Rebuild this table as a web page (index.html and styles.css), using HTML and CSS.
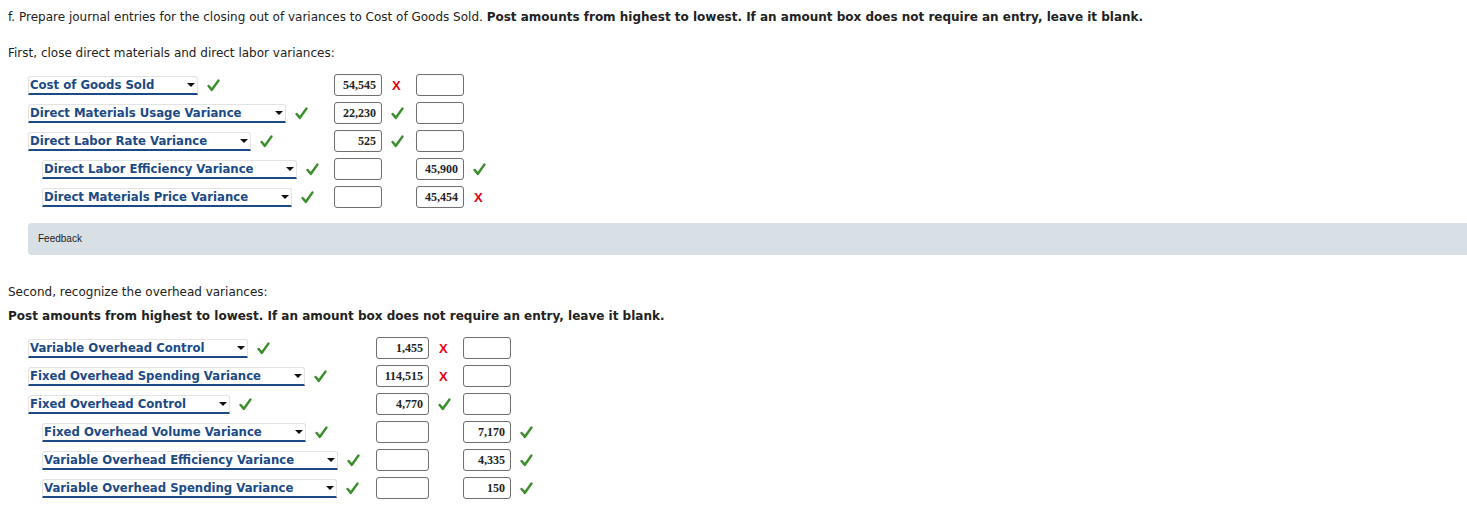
FILE: index.html
```html
<!DOCTYPE html>
<html>
<head>
<meta charset="utf-8">
<link rel="stylesheet" href="styles.css">
</head>
<body>
<p class="intro">f. Prepare journal entries for the closing out of variances to Cost of Goods Sold. <b>Post amounts from highest to lowest. If an amount box does not require an entry, leave it blank.</b></p>
<p class="sub">First, close direct materials and direct labor variances:</p>

<div class="entries block1">
  <div class="row">
    <div class="acct"><span class="sel">Cost of Goods Sold<i class="arr"></i></span><svg class="ok" viewBox="0 0 12 12"><path d="M1.5 6.5 L4.5 10 L10.5 1.5"/></svg></div>
    <div class="amt"><span class="box">54,545</span><span class="bad">X</span></div>
    <div class="amt"><span class="box"></span></div>
  </div>
  <div class="row">
    <div class="acct"><span class="sel">Direct Materials Usage Variance<i class="arr"></i></span><svg class="ok" viewBox="0 0 12 12"><path d="M1.5 6.5 L4.5 10 L10.5 1.5"/></svg></div>
    <div class="amt"><span class="box">22,230</span><svg class="ok" viewBox="0 0 12 12"><path d="M1.5 6.5 L4.5 10 L10.5 1.5"/></svg></div>
    <div class="amt"><span class="box"></span></div>
  </div>
  <div class="row">
    <div class="acct"><span class="sel">Direct Labor Rate Variance<i class="arr"></i></span><svg class="ok" viewBox="0 0 12 12"><path d="M1.5 6.5 L4.5 10 L10.5 1.5"/></svg></div>
    <div class="amt"><span class="box">525</span><svg class="ok" viewBox="0 0 12 12"><path d="M1.5 6.5 L4.5 10 L10.5 1.5"/></svg></div>
    <div class="amt"><span class="box"></span></div>
  </div>
  <div class="row">
    <div class="acct indent"><span class="sel">Direct Labor Efficiency Variance<i class="arr"></i></span><svg class="ok" viewBox="0 0 12 12"><path d="M1.5 6.5 L4.5 10 L10.5 1.5"/></svg></div>
    <div class="amt"><span class="box"></span></div>
    <div class="amt"><span class="box">45,900</span><svg class="ok" viewBox="0 0 12 12"><path d="M1.5 6.5 L4.5 10 L10.5 1.5"/></svg></div>
  </div>
  <div class="row">
    <div class="acct indent"><span class="sel">Direct Materials Price Variance<i class="arr"></i></span><svg class="ok" viewBox="0 0 12 12"><path d="M1.5 6.5 L4.5 10 L10.5 1.5"/></svg></div>
    <div class="amt"><span class="box"></span></div>
    <div class="amt"><span class="box">45,454</span><span class="bad">X</span></div>
  </div>
</div>

<div class="feedback">Feedback</div>

<p class="sub second">Second, recognize the overhead variances:</p>
<p class="sub strong">Post amounts from highest to lowest. If an amount box does not require an entry, leave it blank.</p>

<div class="entries block2">
  <div class="row">
    <div class="acct"><span class="sel">Variable Overhead Control<i class="arr"></i></span><svg class="ok" viewBox="0 0 12 12"><path d="M1.5 6.5 L4.5 10 L10.5 1.5"/></svg></div>
    <div class="amt"><span class="box">1,455</span><span class="bad">X</span></div>
    <div class="amt"><span class="box"></span></div>
  </div>
  <div class="row">
    <div class="acct"><span class="sel">Fixed Overhead Spending Variance<i class="arr"></i></span><svg class="ok" viewBox="0 0 12 12"><path d="M1.5 6.5 L4.5 10 L10.5 1.5"/></svg></div>
    <div class="amt"><span class="box">114,515</span><span class="bad">X</span></div>
    <div class="amt"><span class="box"></span></div>
  </div>
  <div class="row">
    <div class="acct"><span class="sel">Fixed Overhead Control<i class="arr"></i></span><svg class="ok" viewBox="0 0 12 12"><path d="M1.5 6.5 L4.5 10 L10.5 1.5"/></svg></div>
    <div class="amt"><span class="box">4,770</span><svg class="ok" viewBox="0 0 12 12"><path d="M1.5 6.5 L4.5 10 L10.5 1.5"/></svg></div>
    <div class="amt"><span class="box"></span></div>
  </div>
  <div class="row">
    <div class="acct indent"><span class="sel">Fixed Overhead Volume Variance<i class="arr"></i></span><svg class="ok" viewBox="0 0 12 12"><path d="M1.5 6.5 L4.5 10 L10.5 1.5"/></svg></div>
    <div class="amt"><span class="box"></span></div>
    <div class="amt"><span class="box">7,170</span><svg class="ok" viewBox="0 0 12 12"><path d="M1.5 6.5 L4.5 10 L10.5 1.5"/></svg></div>
  </div>
  <div class="row">
    <div class="acct indent"><span class="sel">Variable Overhead Efficiency Variance<i class="arr"></i></span><svg class="ok" viewBox="0 0 12 12"><path d="M1.5 6.5 L4.5 10 L10.5 1.5"/></svg></div>
    <div class="amt"><span class="box"></span></div>
    <div class="amt"><span class="box">4,335</span><svg class="ok" viewBox="0 0 12 12"><path d="M1.5 6.5 L4.5 10 L10.5 1.5"/></svg></div>
  </div>
  <div class="row">
    <div class="acct indent"><span class="sel">Variable Overhead Spending Variance<i class="arr"></i></span><svg class="ok" viewBox="0 0 12 12"><path d="M1.5 6.5 L4.5 10 L10.5 1.5"/></svg></div>
    <div class="amt"><span class="box"></span></div>
    <div class="amt"><span class="box">150</span><svg class="ok" viewBox="0 0 12 12"><path d="M1.5 6.5 L4.5 10 L10.5 1.5"/></svg></div>
  </div>
</div>
</body>
</html>
```

FILE: styles.css
```css
html {
  background: #ffffff;
  overflow: hidden;
}
body {
  margin: 8px 0 8px 8px;
  font-family: "DejaVu Sans", Verdana, sans-serif;
  font-size: 12px;
  color: #222222;
}
p {
  margin: 0;
  line-height: 18px;
}
.intro b, .strong {
  font-weight: bold;
}
.sub {
  margin-top: 18px;
}
.second {
  margin-top: 28px;
}
.strong {
  margin-top: 6px;
  font-weight: bold;
}
.entries {
  display: flex;
  flex-direction: column;
  padding-left: 20px;
}
.block1 {
  margin-top: 9px;
}
.block2 {
  margin-top: 9px;
}
.row {
  display: flex;
  align-items: center;
  height: 28px;
}
.acct {
  display: flex;
  align-items: center;
  gap: 9px;
  flex: none;
  box-sizing: border-box;
}
.block1 .acct { width: 306px; }
.block2 .acct { width: 348px; }
.indent {
  padding-left: 14px;
}
.sel {
  position: relative;
  display: inline-block;
  flex: none;
  white-space: nowrap;
  font-weight: bold;
  font-size: 11.7px;
  color: #1c4a86;
  padding: 1px 43px 1px 1px;
  line-height: 14px;
  border: 1px solid #e3e3e3;
  border-bottom: 2px solid #1c4a86;
  border-radius: 3px 3px 0 0;
}
.arr {
  position: absolute;
  right: 2px;
  top: 6px;
  width: 0;
  height: 0;
  border-left: 4px solid transparent;
  border-right: 4px solid transparent;
  border-top: 4px solid #111111;
}
.ok {
  width: 13px;
  height: 13px;
  fill: none;
  stroke: #3a8e2c;
  stroke-width: 2.3;
  stroke-linecap: round;
  stroke-linejoin: round;
  flex: none;
}
.amt {
  display: flex;
  align-items: center;
  gap: 9px;
  flex: none;
}
.block1 .amt { width: 82px; }
.block2 .amt { width: 87px; }
.box {
  display: block;
  box-sizing: border-box;
  width: 48px;
  height: 22px;
  border: 1px solid #707070;
  border-radius: 3px;
  box-shadow: inset 0 0 1px rgba(0,0,0,0.15);
  font-family: "Liberation Serif", "Times New Roman", serif;
  font-weight: bold;
  font-size: 12px;
  line-height: 21px;
  text-align: right;
  padding-right: 5px;
  color: #222222;
}
.block2 .box { width: 53px; }
.block2 .amt + .amt .box { width: 48px; }
.bad {
  font-family: "Liberation Sans", Arial, sans-serif;
  font-weight: bold;
  font-size: 13px;
  color: #e60012;
  width: 12px;
  padding-left: 1px;
}
.feedback {
  margin: 12px 0 0 20px;
  height: 32px;
  background: #d8dfe5;
  border-radius: 4px 0 0 4px;
  font-family: "Liberation Sans", Arial, sans-serif;
  font-size: 10px;
  color: #222222;
  line-height: 32px;
  padding-left: 10px;
}
```
